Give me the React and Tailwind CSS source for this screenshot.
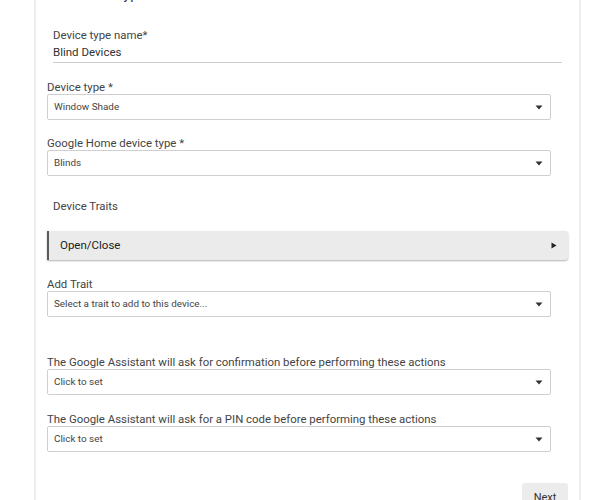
import React from 'react';

function Caret() {
  return (
    <svg width="8" height="5" viewBox="0 0 8 5" className="shrink-0">
      <path d="M0.5 0.5 L7.5 0.5 L4 4.5 Z" fill="#333" />
    </svg>
  );
}

function SelectField({ label, value, className = '' }) {
  return (
    <div className={className}>
      <div className="text-[11.4px] leading-[14px] text-[#444]">{label}</div>
      <div className="w-[504px] h-[26px] border border-[#cfcfcf] rounded-[2px] bg-white flex items-center justify-between pl-[6px] pr-[7px]">
        <span className="text-[9.9px] text-[#444]">{value}</span>
        <Caret />
      </div>
    </div>
  );
}

export default function App() {
  return (
    <div
      className="w-[596px] h-[500px] overflow-hidden bg-white"
      style={{ fontFamily: 'Roboto, "Liberation Sans", sans-serif' }}
    >
      <div className="ml-[34px] w-[547px] h-[520px] border-x-2 border-[#ededed] pl-[11px] pr-[1px]">
        <div className="-mt-[14px] pl-[24px] text-[14px] leading-[16px] text-[#333]">Device Type</div>

        <div className="mt-[26px] ml-[6px] mr-[16px] pb-[2px] border-b border-[#cccccc]">
          <div className="text-[11.4px] leading-[14px] text-[#444]">Device type name*</div>
          <div className="mt-[2px] text-[11.5px] leading-[16px] text-[#333]">Blind Devices</div>
        </div>

        <SelectField className="mt-[17px]" label="Device type *" value="Window Shade" />
        <SelectField className="mt-[16px]" label="Google Home device type *" value="Blinds" />

        <div className="mt-[23px] pl-[6px] text-[11.4px] leading-[15px] text-[#444]">Device Traits</div>

        <div className="mt-[17px] w-[521px] h-[29px] bg-[#ebebeb] border-l-2 border-[#5a5a5a] rounded-r-[3px] shadow-[0_1px_2px_rgba(0,0,0,0.3)] flex items-center justify-between pl-[11px] pr-[11px]">
          <span className="text-[11.5px] text-[#222]">Open/Close</span>
          <svg width="6" height="7" viewBox="0 0 6 7">
            <path d="M0.5 0.5 L5.5 3.5 L0.5 6.5 Z" fill="#222" />
          </svg>
        </div>

        <SelectField className="mt-[17px]" label="Add Trait" value="Select a trait to add to this device..." />
        <SelectField
          className="mt-[38px]"
          label="The Google Assistant will ask for confirmation before performing these actions"
          value="Click to set"
        />
        <SelectField
          className="mt-[17px]"
          label="The Google Assistant will ask for a PIN code before performing these actions"
          value="Click to set"
        />

        <div className="mt-[31px] flex justify-end pr-[10px]">
          <div className="w-[46px] h-[30px] bg-[#ececec] rounded-[3px] flex items-center justify-center">
            <span className="text-[11px] text-[#333]">Next</span>
          </div>
        </div>
      </div>
    </div>
  );
}
